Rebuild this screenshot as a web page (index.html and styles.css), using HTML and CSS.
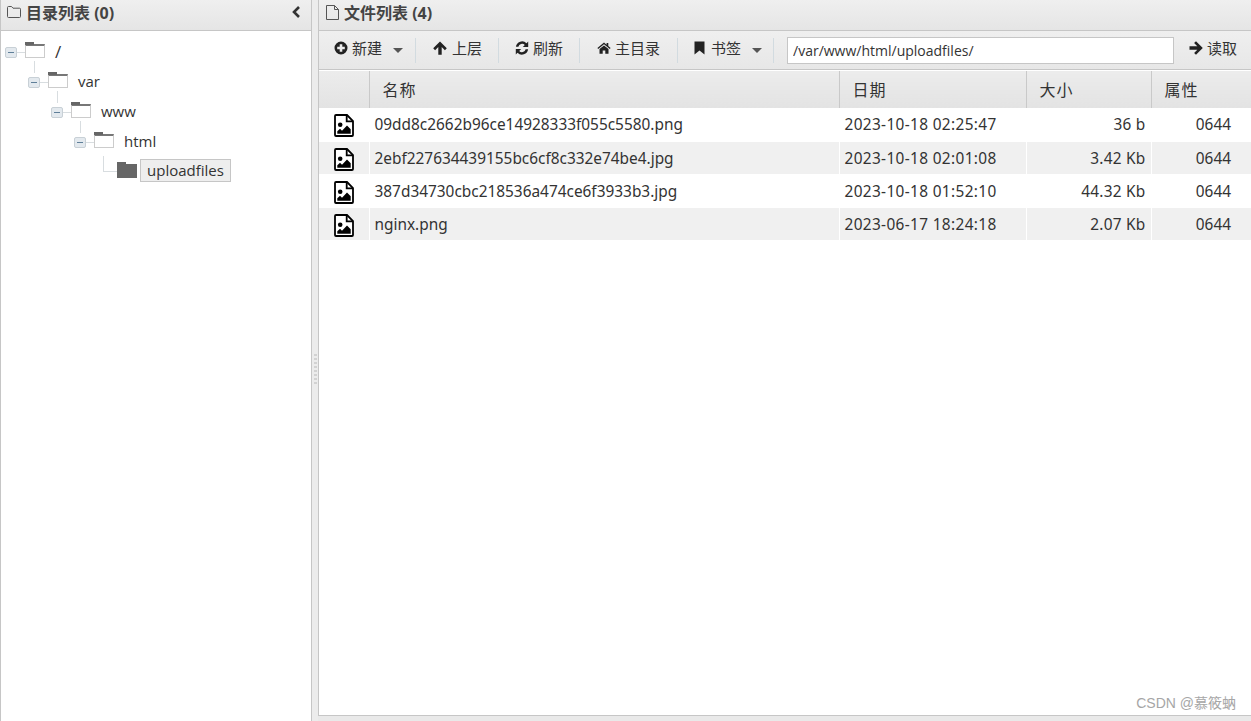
FILE: index.html
```html
<!DOCTYPE html>
<html>
  <head>
    <meta charset="UTF-8" />
    <title>文件管理</title>
    <link rel="stylesheet" href="styles.css">
  </head>
  <body>
    <svg class="icon-defs" width="0" height="0">
      <symbol id="i-folder" viewBox="0 0 14 12"><path d="M.5 1.500a1 1 0 0 1 1-1h3l1.500 1.700h6.500a1 1 0 0 1 1 1v7.300a1 1 0 0 1-1 1h-11a1 1 0 0 1-1-1z" fill="none" stroke="currentColor" stroke-width="1"/></symbol>
      <symbol id="i-file" viewBox="0 0 13 15"><path d="M.5.500h8l4 4v10H.5zM8.500.500v4h4" fill="none" stroke="currentColor" stroke-width="1"/></symbol>
      <symbol id="i-plus" viewBox="0 0 14 14"><path fill-rule="evenodd" d="M7 .5a6.500 6.500 0 1 0 0 13 6.500 6.500 0 0 0 0-13zM5.700 3.200h2.600v2.500h2.500v2.600H8.300v2.500H5.700V8.300H3.200V5.700h2.500z"/></symbol>
      <symbol id="i-up" viewBox="0 0 14 14"><path d="M7 .5 13.800 7.300 11.900 9.200 8.700 6V13.800H5.300V6L2.100 9.200.2 7.300z"/></symbol>
      <symbol id="i-right" viewBox="0 0 14 14"><path d="M13.800 7 7 13.800 5.100 11.900 8.300 8.700H.5V5.300H8.300L5.100 2.100 7 .2z"/></symbol>
      <symbol id="i-refresh" viewBox="0 0 14 14"><path d="M13.200.6v5.400H7.800l2-2A3.700 3.700 0 0 0 3.400 5.800H.9A6.200 6.200 0 0 1 11.500 2.300zM.8 13.400V8h5.400l-2 2a3.700 3.700 0 0 0 6.400-1.800h2.500A6.200 6.200 0 0 1 2.500 11.700z"/></symbol>
      <symbol id="i-home" viewBox="0 0 14 14"><path d="M7 1.500.4 7l.8 1L7 3.200 12.800 8l.8-1-2.300-1.900V2h-1.700v1.700zM7 4.400 2.500 8.100V12.800h3.200V9.400h2.600v3.400h3.200V8.100z"/></symbol>
      <symbol id="i-bookmark" viewBox="0 0 11 14"><path d="M.5.500h10v13L5.500 9.600.5 13.500z"/></symbol>
      <symbol id="i-image" viewBox="0 0 20 23"><path d="M1 2a1 1 0 0 1 1-1h11l6 6v14a1 1 0 0 1-1 1H2a1 1 0 0 1-1-1z" fill="#fff" stroke="#000" stroke-width="1.800"/><path d="M12.700 1.200v6.100h6.100" fill="none" stroke="#000" stroke-width="1.800"/><circle cx="6.200" cy="10.800" r="2.300"/><path d="M3.300 19.800v-2.600l2.700-2.500 2 2 5-5.300 3.700 3.900v4.500z"/></symbol>
    </svg>

    <div class="layout">
      <aside class="side-panel">
        <div class="panel-title">
          <svg class="title-icon"><use href="#i-folder"/></svg>
          <span>目录列表 (0)</span>
          <span class="collapse-btn">
            <svg width="10" height="12" viewBox="0 0 10 12"><path d="M8 1 3 6l5 5" fill="none" stroke="#333" stroke-width="2.600"/></svg>
          </span>
        </div>
        <ul class="tree">
          <li class="tree-node">
            <div class="tree-row"><i class="toggle"></i><i class="folder"></i><span class="tree-label root">/</span></div>
            <ul>
              <li class="tree-node">
                <div class="tree-row"><i class="toggle"></i><i class="folder"></i><span class="tree-label">var</span></div>
                <ul>
                  <li class="tree-node">
                    <div class="tree-row"><i class="toggle"></i><i class="folder"></i><span class="tree-label">www</span></div>
                    <ul>
                      <li class="tree-node">
                        <div class="tree-row"><i class="toggle"></i><i class="folder"></i><span class="tree-label">html</span></div>
                        <ul>
                          <li class="tree-node leaf">
                            <div class="tree-row"><i class="elbow"></i><i class="folder solid"></i><span class="tree-label selected">uploadfiles</span></div>
                          </li>
                        </ul>
                      </li>
                    </ul>
                  </li>
                </ul>
              </li>
            </ul>
          </li>
        </ul>
      </aside>

      <div class="splitter"><i class="grip"></i></div>

      <main class="main-panel">
        <div class="panel-title main-title">
          <svg class="title-icon file-icon"><use href="#i-file"/></svg>
          <span>文件列表 (4)</span>
        </div>
        <div class="toolbar">
          <a class="tool tool-new"><svg class="tool-icon"><use href="#i-plus"/></svg>新建<i class="caret"></i></a>
          <a class="tool tool-up"><svg class="tool-icon"><use href="#i-up"/></svg>上层</a>
          <a class="tool tool-refresh"><svg class="tool-icon"><use href="#i-refresh"/></svg>刷新</a>
          <a class="tool tool-home"><svg class="tool-icon"><use href="#i-home"/></svg>主目录</a>
          <a class="tool tool-mark"><svg class="tool-icon mark"><use href="#i-bookmark"/></svg>书签<i class="caret"></i></a>
          <input class="path-input" type="text" value="/var/www/html/uploadfiles/" />
          <a class="tool tool-read"><svg class="tool-icon"><use href="#i-right"/></svg>读取</a>
        </div>
        <table class="files">
          <colgroup>
            <col class="c-icon"><col class="c-name"><col class="c-date"><col class="c-size"><col class="c-attr">
          </colgroup>
          <thead>
            <tr><th></th><th>名称</th><th>日期</th><th>大小</th><th>属性</th></tr>
          </thead>
          <tbody>
            <tr>
              <td class="ico"><svg width="20" height="23"><use href="#i-image"/></svg></td>
              <td>09dd8c2662b96ce14928333f055c5580.png</td>
              <td class="date">2023-10-18 02:25:47</td>
              <td class="num size">36 b</td>
              <td class="num attr">0644</td>
            </tr>
            <tr>
              <td class="ico"><svg width="20" height="23"><use href="#i-image"/></svg></td>
              <td>2ebf227634439155bc6cf8c332e74be4.jpg</td>
              <td class="date">2023-10-18 02:01:08</td>
              <td class="num size">3.42 Kb</td>
              <td class="num attr">0644</td>
            </tr>
            <tr>
              <td class="ico"><svg width="20" height="23"><use href="#i-image"/></svg></td>
              <td>387d34730cbc218536a474ce6f3933b3.jpg</td>
              <td class="date">2023-10-18 01:52:10</td>
              <td class="num size">44.32 Kb</td>
              <td class="num attr">0644</td>
            </tr>
            <tr>
              <td class="ico"><svg width="20" height="23"><use href="#i-image"/></svg></td>
              <td>nginx.png</td>
              <td class="date">2023-06-17 18:24:18</td>
              <td class="num size">2.07 Kb</td>
              <td class="num attr">0644</td>
            </tr>
          </tbody>
        </table>
        <div class="watermark">CSDN @慕筱蚋</div>
      </main>
    </div>
  </body>
</html>
```

FILE: styles.css
```css
* {
  box-sizing: border-box;
}

html,
body {
  height: 100%;
}

body {
  margin: 0;
  overflow: hidden;
  background: #e9e9e9;
  color: #333;
  font-family: "Open Sans", "Noto Sans CJK SC", sans-serif;
  font-size: 15px;
}

.icon-defs {
  position: absolute;
}

.layout {
  display: flex;
  height: 721px;
}

/* panels */
.side-panel {
  width: 312px;
  background: #fff;
  border-left: 1px solid #c6c6c6;
  border-right: 1px solid #c6c6c6;
}

.splitter {
  width: 6px;
  display: flex;
  align-items: center;
  justify-content: center;
  background: #ececec;
}

.grip {
  width: 3px;
  height: 30px;
  margin-top: 17px;
  background: repeating-linear-gradient(#d2d2d2 0, #d2d2d2 2px, #ececec 2px, #ececec 4px);
}

.main-panel {
  position: relative;
  width: 933px;
  height: 716px;
  background: #fff;
  border-left: 1px solid #c6c6c6;
  border-bottom: 1px solid #c6c6c6;
}

.panel-title {
  display: flex;
  align-items: center;
  height: 31px;
  padding: 0 6px 6px 6px;
  background: linear-gradient(#efefef, #e5e5e5);
  border-bottom: 1px solid #c6c6c6;
  font-size: 16px;
  font-weight: bold;
  color: #444;
}

.title-icon {
  width: 14px;
  height: 12px;
  margin-right: 5px;
  color: #555;
}

.file-icon {
  width: 13px;
  height: 15px;
  margin-left: 1px;
}

.collapse-btn {
  display: flex;
  margin-left: auto;
  margin-right: 4px;
}

/* directory tree */
.tree,
.tree ul {
  list-style: none;
  margin: 0;
  padding: 0;
}

.tree {
  padding: 6px 0 0 4px;
}

.tree ul {
  padding-left: 23px;
}

.tree-row {
  position: relative;
  display: flex;
  align-items: center;
  height: 30px;
}

.tree-node > ul > .tree-node > .tree-row::before {
  content: "";
  position: absolute;
  left: 6px;
  top: -6px;
  height: 12px;
  width: 1px;
  background: #d8dde0;
}

.tree-node > ul > .leaf > .tree-row::before {
  display: none;
}

.toggle {
  position: relative;
  width: 12px;
  height: 11px;
  margin-right: 8px;
  background: #e3e9ee;
  border: 1px solid #c8d0d6;
  border-radius: 2px;
}

.toggle::before {
  content: "";
  position: absolute;
  left: 2px;
  top: 4px;
  width: 6px;
  height: 1px;
  background: #5f7f99;
}

.toggle::after {
  content: "";
  position: absolute;
  left: 11px;
  top: 4px;
  width: 8px;
  height: 1px;
  background: #d8dde0;
}

.elbow {
  width: 14px;
  height: 16px;
  margin: -17px 0 0 6px;
  border-left: 1px solid #d8dde0;
  border-bottom: 1px solid #d8dde0;
}

.folder {
  position: relative;
  width: 20px;
  height: 14px;
  margin-top: -3px;
  background: #fff;
  border: 1px solid #ccc;
  border-top: 2px solid #777;
}

.folder::before {
  content: "";
  position: absolute;
  left: -1px;
  top: -4px;
  width: 9px;
  height: 3px;
  background: #666;
}

.folder.solid {
  background: #666;
  border-color: #666;
}

.tree-label {
  margin: -2px 0 0 10px;
  font-size: 15px;
  color: #333;
}

.tree-label.root {
  font-size: 17px;
}

.tree-label.selected {
  margin: -3px 0 0 3px;
  padding: 0 6px;
  height: 23px;
  line-height: 21px;
  background: #eee;
  border: 1px solid #c6c6c6;
}

/* toolbar */
.toolbar {
  display: flex;
  align-items: center;
  height: 39px;
  background: linear-gradient(#efefef, #e7e7e7);
  border-bottom: 1px solid #c6c6c6;
  font-size: 15px;
  color: #333;
}

.tool {
  display: flex;
  align-items: center;
  height: 25px;
  border-right: 1px solid #d2dbe0;
  padding-bottom: 5px;
}

.tool-icon {
  width: 14px;
  height: 14px;
  margin-right: 4px;
  fill: #222;
}

.tool-icon.mark {
  width: 11px;
  margin-right: 6px;
}

.tool-new {
  width: 97px;
  padding-left: 15px;
}

.tool-up {
  width: 83px;
  padding-left: 17px;
}

.tool-up .tool-icon {
  margin-right: 5px;
}

.tool-refresh {
  width: 81px;
  padding-left: 16px;
}

.tool-home {
  width: 98px;
  padding-left: 17px;
}

.tool-mark {
  width: 96px;
  padding-left: 16px;
}

.tool-read {
  border-right: 0;
  padding-left: 15px;
}

.caret {
  width: 0;
  height: 0;
  margin: 5px 0 0 11px;
  border-left: 5px solid transparent;
  border-right: 5px solid transparent;
  border-top: 5px solid #555;
}

.path-input {
  width: 387px;
  height: 27px;
  margin-left: 13px;
  padding: 0 5px;
  border: 1px solid #c6c6c6;
  background: #fff;
  color: #333;
  font-family: inherit;
  font-size: 14px;
}

/* file table */
.files {
  width: 932px;
  margin-top: 1px;
  table-layout: fixed;
  border-collapse: collapse;
}

.c-icon {
  width: 50px;
}

.c-name {
  width: 470px;
}

.c-date {
  width: 187px;
}

.c-size {
  width: 125px;
}

.files th {
  height: 37px;
  padding: 0 0 2px 13px;
  background: linear-gradient(#ececec, #e3e3e3);
  border-left: 1px solid #c9c9c9;
  font-size: 16px;
  font-weight: normal;
  letter-spacing: 1px;
  text-align: left;
}

.files th:first-child {
  border-left: 0;
}

.files td {
  height: 33px;
  padding: 2px 5px 0;
  border-left: 1px solid #fff;
  border-bottom: 1px solid #fff;
  font-family: "Noto Sans", "Noto Sans CJK SC", sans-serif;
  font-size: 15.4px;
  line-height: 20px;
  color: #333;
  white-space: nowrap;
}

.files td:first-child {
  border-left: 0;
}

.files tbody tr:nth-child(even) td {
  background: #f0f0f0;
}

.files .ico {
  padding: 3px 0 0 15px;
}

.files .ico svg {
  display: block;
}

.files .date {
  letter-spacing: 0.35px;
}

.files .num {
  text-align: right;
}

.files .size {
  letter-spacing: 0.25px;
}

.files .attr {
  padding-right: 20px;
}

.watermark {
  position: absolute;
  right: 15px;
  bottom: 3px;
  font-family: "Liberation Sans", "Noto Sans CJK SC", sans-serif;
  font-size: 14px;
  color: #a6a6a6;
}
```
